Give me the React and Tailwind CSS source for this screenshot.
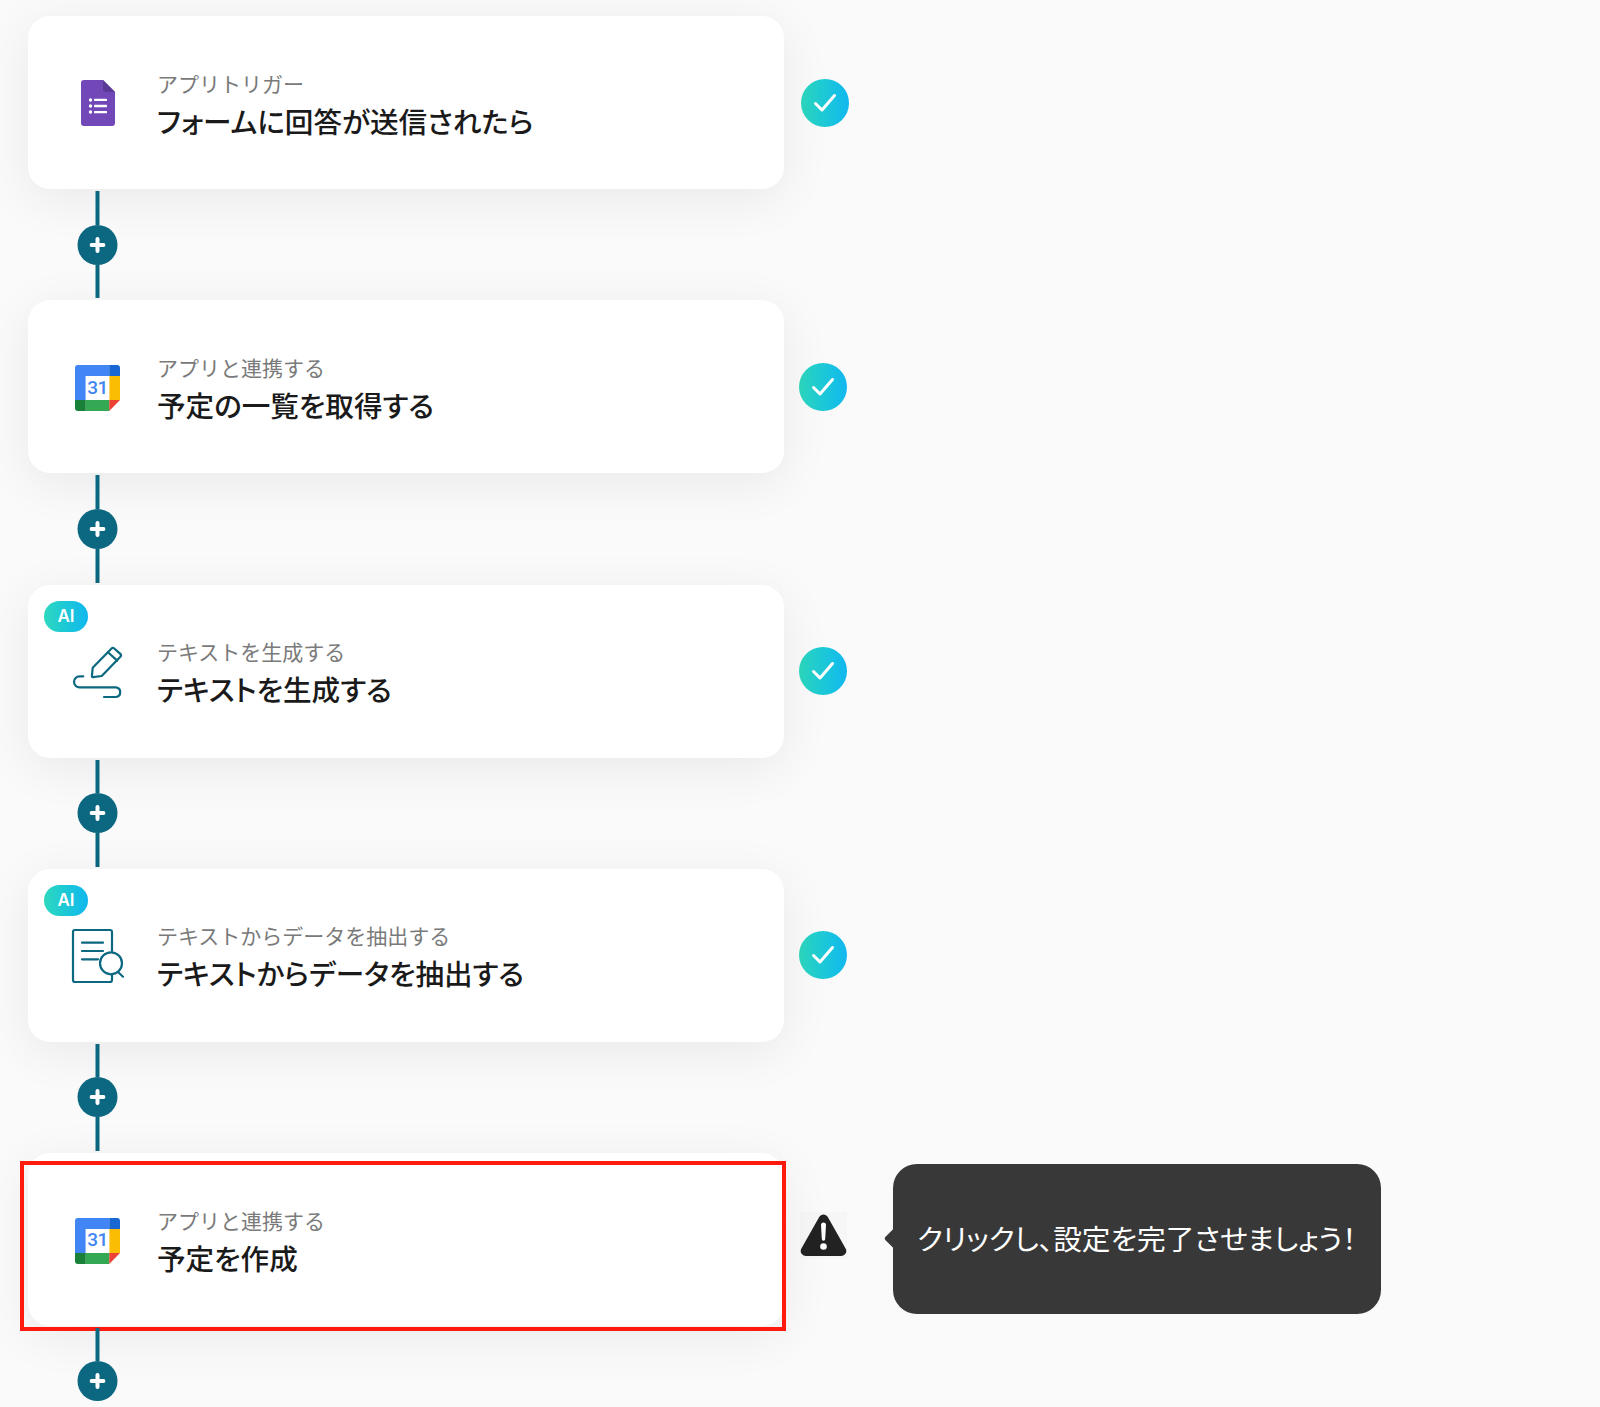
import { Fragment } from "react";

const JP = "font-['Noto_Sans_CJK_JP',sans-serif]";

function FormsIcon() {
  return (
    <svg width="34" height="46" viewBox="0 0 34 46">
      <path d="M3 0H22L34 12V43a3 3 0 0 1-3 3H3a3 3 0 0 1-3-3V3a3 3 0 0 1 3-3Z" fill="#7248b9" />
      <path d="M22 0L34 12H25a3 3 0 0 1-3-3Z" fill="#5a3a94" />
      <circle cx="9.5" cy="20" r="1.7" fill="#fff" />
      <circle cx="9.5" cy="26" r="1.7" fill="#fff" />
      <circle cx="9.5" cy="32" r="1.7" fill="#fff" />
      <rect x="13" y="18.7" width="13" height="2.4" rx="0.6" fill="#fff" />
      <rect x="13" y="24.8" width="13" height="2.4" rx="0.6" fill="#fff" />
      <rect x="13" y="30.9" width="13" height="2.4" rx="0.6" fill="#fff" />
    </svg>
  );
}

function CalendarIcon() {
  return (
    <div className="relative w-[45px] h-[46px] mt-[2px] -ml-[1px]">
      <svg width="45" height="46" viewBox="0 0 46 46" preserveAspectRatio="none" className="absolute inset-0">
        <path d="M3 0H35V11H11V35H0V3a3 3 0 0 1 3-3Z" fill="#4285f4" />
        <path d="M35 0H43a3 3 0 0 1 3 3V11H35Z" fill="#1967d2" />
        <rect x="35" y="11" width="11" height="24" fill="#fbbc04" />
        <path d="M11 35H35V46H11Z" fill="#34a853" />
        <path d="M0 35H11V46H3a3 3 0 0 1-3-3Z" fill="#188038" />
        <path d="M35 35H46L35 46Z" fill="#ea4335" />
        <rect x="11" y="11" width="24" height="24" fill="#fff" />
      </svg>
      <span className="absolute left-[11px] top-[11px] w-[23px] h-[24px] flex items-center justify-center font-['Roboto',sans-serif] font-medium text-[19px] tracking-[-0.5px] text-[#4285f4]">
        31
      </span>
    </div>
  );
}

function PenIcon() {
  return (
    <svg width="48" height="50" viewBox="0 0 48 50" fill="none" stroke="#0b6880" strokeWidth="2.2" strokeLinecap="round" strokeLinejoin="round" className="overflow-visible -ml-[1px] mt-[1px]">
      <path d="M37.5 1.5a2 2 0 0 1 2.8 0l6 5.4a2 2 0 0 1 .1 2.8L27.7 29l-8.7 1.2a1 1 0 0 1-1.1-1.1l.8-8.3Z" />
      <path d="M34 5.2L43.2 13.6" />
      <path d="M9.3 29.3H5.5a5.5 5.5 0 0 0 0 11H42a4.9 4.9 0 0 1 0 9.7H30" />
    </svg>
  );
}

function DocSearchIcon() {
  return (
    <svg width="50" height="52" viewBox="0 0 50 52" fill="none" stroke="#0b6880" strokeWidth="2.2" strokeLinecap="round" strokeLinejoin="round" className="overflow-visible mt-[1px]">
      <path d="M39 21V2a2 2 0 0 0-2-2H2a2 2 0 0 0-2 2V50a2 2 0 0 0 2 2H37a2 2 0 0 0 2-2V44.5" />
      <path d="M9 12.7H30M9 21H30M9 29.3H25" />
      <circle cx="38" cy="33.3" r="11" />
      <path d="M45 42L50 46.7" />
    </svg>
  );
}

function CheckBadge({ className }) {
  return (
    <div className={`w-[48px] h-[48px] shrink-0 rounded-full bg-gradient-to-r from-[#2dd8bd] to-[#12b7ee] flex items-center justify-center ${className}`}>
      <svg width="24" height="20" viewBox="0 0 24 20" fill="none" stroke="#fff" strokeWidth="3" strokeLinecap="round" strokeLinejoin="round">
        <path d="M2.5 10.5L9 17L21.5 2.5" />
      </svg>
    </div>
  );
}

function WarnBadge() {
  return (
    <div className="w-[47px] h-[47px] shrink-0 ml-[16px] -mt-[9px] bg-[#f6f6f6] flex items-center justify-center">
      <svg width="47" height="42" viewBox="0 0 47 42">
        <path d="M19.2 3a5 5 0 0 1 8.6 0L45.6 34.5A5 5 0 0 1 41.2 42H5.8a5 5 0 0 1-4.4-7.5Z" fill="#222" />
        <path d="M21 11a2.5 2.5 0 0 1 5 0L25.2 25a1.7 1.7 0 0 1-3.4 0Z" fill="#fff" />
        <circle cx="23.5" cy="32.5" r="3.3" fill="#fff" />
      </svg>
    </div>
  );
}

function Connector({ last }) {
  return (
    <div className={`ml-[50px] w-[40px] flex flex-col items-center py-[2px] ${last ? "h-[80px]" : "h-[111.25px]"}`}>
      <div className={`w-[4px] bg-[#0b6880] -translate-x-[0.5px] ${last ? "h-[33px]" : "flex-1"}`} />
      <div className="w-[40px] h-[40px] shrink-0 rounded-full bg-[#0b6880] flex items-center justify-center -translate-x-[0.5px]">
        <svg width="16" height="16" viewBox="0 0 16 16" fill="none" stroke="#fff" strokeWidth="4" strokeLinecap="round">
          <path d="M8 2V14M2 8H14" />
        </svg>
      </div>
      {!last && <div className="w-[4px] flex-1 bg-[#0b6880] -translate-x-[0.5px]" />}
    </div>
  );
}

function StepCard({ icon, label, title, ai, highlighted }) {
  return (
    <div className="relative w-[756px] h-[173px] shrink-0 rounded-[22px] bg-white shadow-[0_10px_50px_rgba(0,0,0,0.07)] flex items-center pl-[40px]">
      {ai && (
        <span className="absolute left-[16px] top-[16px] w-[44px] h-[31px] rounded-full bg-gradient-to-r from-[#2dd8bd] to-[#12b7ee] flex items-center justify-center font-['Inter',sans-serif] font-semibold text-[17px] text-white pt-[1px]">
          AI
        </span>
      )}
      <div className="w-[60px] shrink-0 flex justify-center">{icon}</div>
      <div className="ml-[29px] flex flex-col">
        <span className={`${JP} text-[21px] leading-[28px] text-[#7a7a7a] pt-[2px]`}>{label}</span>
        <span className={`${JP} mt-[6px] text-[28.6px] leading-[36px] font-medium text-[#1a1a1a] [font-feature-settings:'palt']`}>{title}</span>
      </div>
      {highlighted && (
        <div className="absolute -left-[8px] -right-[2px] top-[8px] -bottom-[5px] border-4 border-[#ff1a0f]" />
      )}
    </div>
  );
}

const steps = [
  { icon: <FormsIcon />, label: "アプリトリガー", title: "フォームに回答が送信されたら", badge: "ml-[17px]" },
  { icon: <CalendarIcon />, label: "アプリと連携する", title: "予定の一覧を取得する", badge: "ml-[15px]" },
  { icon: <PenIcon />, label: "テキストを生成する", title: "テキストを生成する", ai: true, badge: "ml-[15px]" },
  { icon: <DocSearchIcon />, label: "テキストからデータを抽出する", title: "テキストからデータを抽出する", ai: true, badge: "ml-[15px]" },
];

export default function App() {
  return (
    <div className="h-[1407px] overflow-hidden bg-[#fafafa] pt-[16px] pl-[28px]">
      {steps.map((step) => (
        <Fragment key={step.label + step.title}>
          <div className="flex items-center">
            <StepCard {...step} />
            <CheckBadge className={step.badge} />
          </div>
          <Connector />
        </Fragment>
      ))}

      <div className="flex items-center">
        <StepCard icon={<CalendarIcon />} label="アプリと連携する" title="予定を作成" highlighted />
        <WarnBadge />
        {/* tooltip */}
        <div className="relative ml-[46px] -mt-[2px] w-[488px] h-[150px] shrink-0 rounded-[24px] bg-[#383838] flex items-center pl-[24px]">
          <div className="absolute -left-[6px] top-[67px] w-[15px] h-[15px] rotate-45 rounded-[2px] bg-[#383838]" />
          <span className={`${JP} text-[28.7px] leading-none text-white whitespace-nowrap [font-feature-settings:'palt']`}>
            クリックし、設定を完了させましょう！
          </span>
        </div>
      </div>
      <Connector last />
    </div>
  );
}
